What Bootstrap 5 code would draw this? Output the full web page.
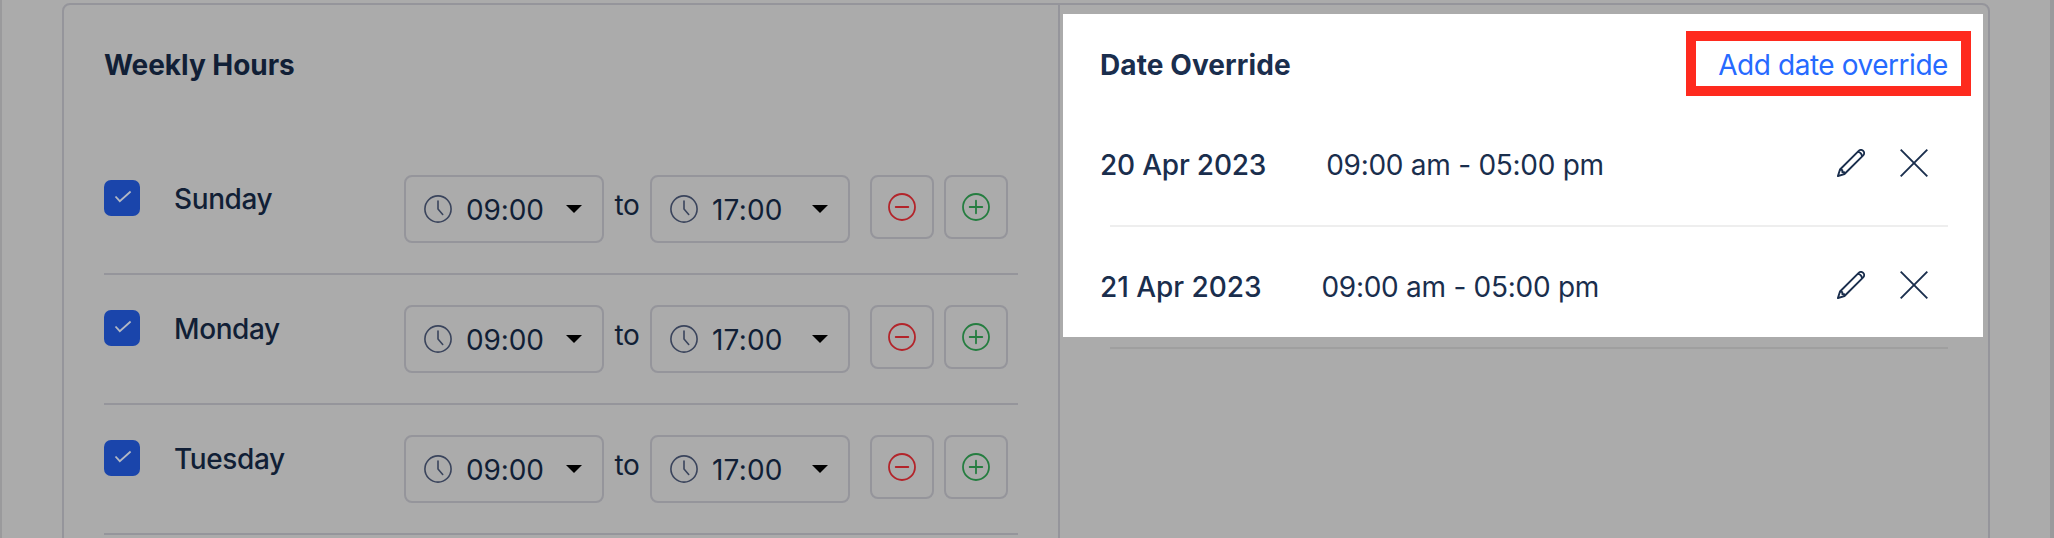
<!DOCTYPE html>
<html lang="en">
<head>
<meta charset="utf-8">
<title>Availability</title>
<link href="https://cdn.jsdelivr.net/npm/bootstrap@5.3.0/dist/css/bootstrap.min.css" rel="stylesheet">
<style>
  body { font: 400 28px/40px Inter, sans-serif; background: #ababab; color: #111f36; overflow: hidden; letter-spacing: -.25px; }
  .frame { height: 538px; border-left: 2px solid #9a9a9c; border-right: 4px solid #9a9a9c; padding: 3px 60px 0; }
  .panel { height: 560px; width: 1928px; border: 2px solid #95959b; border-radius: 8px; }
  .weekly { width: 996px; padding: 0 40px; border-right: 2px solid #95959b; }
  .heading { font-size: 28px; line-height: 40px; font-weight: 650; margin: 0; letter-spacing: -.05px; }
  .weekly .heading { padding-top: 40px; height: 140px; }
  .day-row { width: 914px; height: 130px; border-bottom: 2px solid #95959b; }
  .tick { width: 36px; height: 36px; margin: 35px 34px 0 0; border-radius: 7px; background: #1a45ab; }
  .day-name { width: 230px; margin-top: 34px; font-weight: 500; letter-spacing: -.4px; }
  .time-select { width: 200px; height: 68px; margin-top: 30px; padding: 0 20px 0 18px; border: 2px solid #95959b; border-radius: 8px; }
  .time-value { margin-left: 14px; padding-top: 2px; letter-spacing: -.15px; }
  .to-label + .time-select .time-value { letter-spacing: .2px; }
  .to-label { width: 46px; margin-top: 40px; }
  .sq-btn { width: 64px; height: 64px; margin: 30px 0 0 10px; padding: 0; border: 2px solid #95959b; border-radius: 8px; }
  .time-select + .sq-btn { margin-left: 20px; }
  .spotlight { width: 920px; height: 323px; margin: 9px 0 0 3px; padding: 0 35px 0 37px; background: #fff; color: #1a2e4d; }
  .spot-head { height: 91px; padding-top: 17px; }
  .spot-head .heading { margin-top: 14px; letter-spacing: .1px; }
  .add-link { height: 65px; width: 285px; margin-right: -23px; border: 10px solid #fe2a1e; color: #266aff; padding: 4px 13px 0 0; letter-spacing: -.45px; }
  .override { height: 110px; padding-top: 40px; letter-spacing: -.27px; }
  .override.with-rule { height: 120px; }
  .override-date { font-weight: 500; margin-right: 60px; letter-spacing: -.2px; }
  .override:last-child .override-date { letter-spacing: -.05px; }
  .icons { gap: 35px; margin: 4px 20px 0 0; }
  .rule { height: 2px; margin-left: 10px; background: #eee; }
  .rule-dim { width: 838px; height: 2px; margin: 10px 0 0 50px; background: #9f9f9f; }
</style>
</head>
<body>
<svg width="0" height="0" class="position-absolute">
  <defs>
    <symbol id="clock" viewBox="0 0 28 28"><g fill="none" stroke="#3a445c" stroke-width="1.6" stroke-linecap="round" stroke-linejoin="round"><circle cx="14" cy="14" r="13.1"/><path d="M14 6v8l4.7 5.5"/></g></symbol>
    <symbol id="pencil" viewBox="0 0 28 28"><g fill="none" stroke="currentColor" stroke-width="1.9" stroke-linejoin="round"><path d="M.9 27.1 3 20.5 21.7 1.8a3.1 3.1 0 0 1 4.5 4.5L7.5 25Z"/><path d="M20.6 2.9q3.8.3 4.5 4.5M3 20.5l2.3.6.1 2 1.8.2.3 1.7"/></g></symbol>
    <symbol id="cross" viewBox="0 0 28 28"><path d="m.7.7 26.6 26.6M27.3.7.7 27.3" fill="none" stroke="currentColor" stroke-width="1.9"/></symbol>
    <symbol id="minus" viewBox="0 0 28 28"><g fill="none" stroke="#b3242a" stroke-width="1.8" stroke-linecap="round"><circle cx="14" cy="14" r="13"/><path d="M7.7 14h12.6"/></g></symbol>
    <symbol id="plus" viewBox="0 0 28 28"><g fill="none" stroke="#257d40" stroke-width="1.8" stroke-linecap="round"><circle cx="14" cy="14" r="13"/><path d="M7.7 14h12.6M14 7.7v12.6"/></g></symbol>
    <symbol id="check" viewBox="0 0 36 36"><path d="m11.5 16.5 4.3 4.7L26.6 11.5" fill="none" stroke="#b4b9c4" stroke-width="1.8"/></symbol>
    <symbol id="caret" viewBox="0 0 16 8"><path d="M0 0h16L8 8Z" fill="#000"/></symbol>
  </defs>
</svg>
<main class="frame">
  <div class="panel d-flex">
    <section class="weekly flex-shrink-0">
      <h2 class="heading">Weekly Hours</h2>
      <div class="day-row d-flex">
        <span class="tick"><svg class="d-block" width="36" height="36"><use href="#check"/></svg></span>
        <span class="day-name">Sunday</span>
        <div class="time-select d-flex align-items-center"><svg width="28" height="28"><use href="#clock"/></svg><span class="time-value">09:00</span><svg class="ms-auto" width="16" height="8"><use href="#caret"/></svg></div>
        <span class="to-label text-center">to</span>
        <div class="time-select d-flex align-items-center"><svg width="28" height="28"><use href="#clock"/></svg><span class="time-value">17:00</span><svg class="ms-auto" width="16" height="8"><use href="#caret"/></svg></div>
        <button class="sq-btn btn d-flex"><svg class="m-auto" width="28" height="28"><use href="#minus"/></svg></button>
        <button class="sq-btn btn d-flex"><svg class="m-auto" width="28" height="28"><use href="#plus"/></svg></button>
      </div>
      <div class="day-row d-flex">
        <span class="tick"><svg class="d-block" width="36" height="36"><use href="#check"/></svg></span>
        <span class="day-name">Monday</span>
        <div class="time-select d-flex align-items-center"><svg width="28" height="28"><use href="#clock"/></svg><span class="time-value">09:00</span><svg class="ms-auto" width="16" height="8"><use href="#caret"/></svg></div>
        <span class="to-label text-center">to</span>
        <div class="time-select d-flex align-items-center"><svg width="28" height="28"><use href="#clock"/></svg><span class="time-value">17:00</span><svg class="ms-auto" width="16" height="8"><use href="#caret"/></svg></div>
        <button class="sq-btn btn d-flex"><svg class="m-auto" width="28" height="28"><use href="#minus"/></svg></button>
        <button class="sq-btn btn d-flex"><svg class="m-auto" width="28" height="28"><use href="#plus"/></svg></button>
      </div>
      <div class="day-row d-flex">
        <span class="tick"><svg class="d-block" width="36" height="36"><use href="#check"/></svg></span>
        <span class="day-name">Tuesday</span>
        <div class="time-select d-flex align-items-center"><svg width="28" height="28"><use href="#clock"/></svg><span class="time-value">09:00</span><svg class="ms-auto" width="16" height="8"><use href="#caret"/></svg></div>
        <span class="to-label text-center">to</span>
        <div class="time-select d-flex align-items-center"><svg width="28" height="28"><use href="#clock"/></svg><span class="time-value">17:00</span><svg class="ms-auto" width="16" height="8"><use href="#caret"/></svg></div>
        <button class="sq-btn btn d-flex"><svg class="m-auto" width="28" height="28"><use href="#minus"/></svg></button>
        <button class="sq-btn btn d-flex"><svg class="m-auto" width="28" height="28"><use href="#plus"/></svg></button>
      </div>
    </section>
    <section class="flex-grow-1">
      <div class="spotlight">
        <div class="spot-head d-flex justify-content-between">
          <h2 class="heading">Date Override</h2>
          <a class="add-link text-end text-decoration-none text-nowrap" href="#">Add date override</a>
        </div>
        <div class="override with-rule d-flex align-items-start">
          <span class="override-date">20 Apr 2023</span><span>09:00 am - 05:00 pm</span>
          <span class="icons d-flex ms-auto"><svg width="28" height="28"><use href="#pencil"/></svg><svg width="28" height="28"><use href="#cross"/></svg></span>
        </div>
        <div class="rule"></div>
        <div class="override d-flex align-items-start">
          <span class="override-date">21 Apr 2023</span><span>09:00 am - 05:00 pm</span>
          <span class="icons d-flex ms-auto"><svg width="28" height="28"><use href="#pencil"/></svg><svg width="28" height="28"><use href="#cross"/></svg></span>
        </div>
      </div>
      <div class="rule-dim"></div>
    </section>
  </div>
</main>
<script src="https://cdn.jsdelivr.net/npm/bootstrap@5.3.0/dist/js/bootstrap.bundle.min.js"></script>
</body>
</html>
